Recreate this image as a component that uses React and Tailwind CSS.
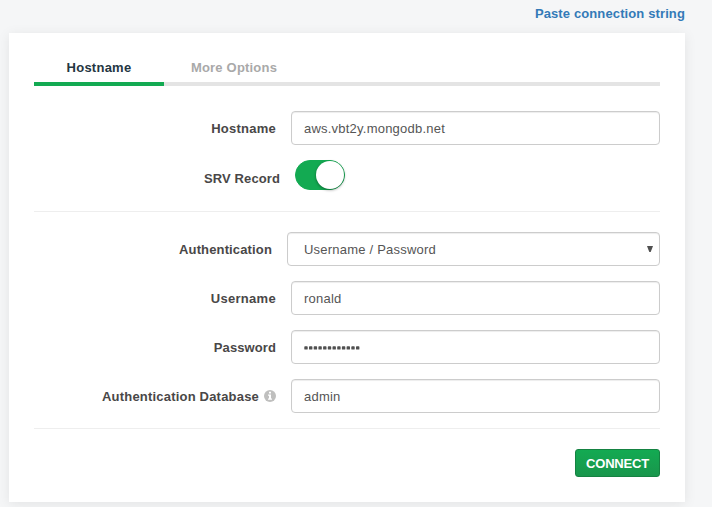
const inputClass =
  'block h-[34px] w-[369px] rounded-[4px] border border-[#ccc] bg-white px-3 text-[13px] tracking-[0.22px] text-[#555] shadow-[inset_0_1px_1px_rgba(0,0,0,0.075)] outline-none';

function Row({ label, labelClass, icon, children, className }) {
  return (
    <div className={'flex items-center justify-end ' + className}>
      <label className={'flex items-center whitespace-nowrap font-bold text-[#494747] ' + labelClass}>
        {label}
        {icon}
      </label>
      {children}
    </div>
  );
}

function InfoIcon() {
  return (
    <svg className="mb-0.5 ml-[5px] size-3" viewBox="0 0 12 12">
      <circle cx="6" cy="6" r="6" fill="#bfbfbe" />
      <path d="M5 1.8h2v1.6H5zM4 4.6h3v4h1v1.2H4V8.6h1V5.8H4z" fill="#fff" />
    </svg>
  );
}

export default function App() {
  return (
    <div className="h-[507px] w-[712px] overflow-hidden bg-[#f5f6f7] font-['Liberation_Sans',Arial,sans-serif] text-[13px] leading-5">
      <div className="flex h-[33px] justify-end pr-[27px] pt-[4px]">
        <a className="font-bold tracking-[0.12px] text-[#337ab7]">Paste connection string</a>
      </div>
      <main className="ml-[9px] h-[469px] w-[676px] bg-white px-[25px] pt-[20px] shadow-[0_2px_12px_rgba(0,0,0,0.08)]">
        <nav className="flex h-[33px] border-b-4 border-[#e4e4e4] font-bold">
          <div className="h-[33px] w-[130px] border-b-4 border-[#13aa52] pt-[5px] text-center tracking-[0.25px] text-[#243642]">
            Hostname
          </div>
          <div className="w-[140px] pt-[5px] text-center tracking-[0.2px] text-[#a9a9a9]">More Options</div>
        </nav>

        <Row className="mt-[25px]" label="Hostname" labelClass="mr-[15px] pt-0.5 tracking-[0.25px]">
          <input className={inputClass} defaultValue="aws.vbt2y.mongodb.net" />
        </Row>
        <Row className="mt-[15px] h-[30px]" label="SRV Record" labelClass="mr-[15px] pt-[8px] tracking-[0.1px]">
          <div className="mr-[315px] flex h-[30px] w-[50px] justify-end rounded-full border border-[#13aa52] bg-[#13aa52]">
            <div className="size-7 rounded-full bg-white shadow-[0_1px_3px_rgba(0,0,0,0.4)]" />
          </div>
        </Row>

        <hr className="mt-[21px] border-[#eee]" />

        <Row className="mt-[20px]" label="Authentication" labelClass="mr-[15px] pt-0.5 tracking-[0.14px]">
          <div className="flex h-[34px] w-[373px] items-center justify-between rounded-[4px] border border-[#ccc] bg-white pl-[16px] pr-[6px] tracking-[0.22px] text-[#555] shadow-[inset_0_1px_1px_rgba(0,0,0,0.075)]">
            <span className="pt-0.5">Username / Password</span>
            <svg className="mb-px h-[6px] w-[6px]" viewBox="0 0 6 6">
              <path d="M0 0h6L3.7 6H2.3z" fill="#505050" />
            </svg>
          </div>
        </Row>
        <Row className="mt-[15px]" label="Username" labelClass="mr-[15px] pt-0.5 tracking-[0.3px]">
          <input className={inputClass} defaultValue="ronald" />
        </Row>
        <Row className="mt-[15px]" label="Password" labelClass="mr-[15px] pt-0.5 tracking-[0.1px]">
          <div className={inputClass + ' !flex items-center'}>
            <svg className="mt-px h-1 w-[57px]" viewBox="0 0 57 4" fill="#505050" aria-label="Password">
              {Array.from({ length: 12 }, (_, i) => (
                <rect key={i} x={0.3 + i * 4.7} y="0.2" width="3.4" height="3.4" rx="0.7" />
              ))}
            </svg>
          </div>
        </Row>
        <Row
          className="mt-[15px]"
          label="Authentication Database"
          labelClass="mr-[15px] pt-0.5 tracking-[0.2px]"
          icon={<InfoIcon />}
        >
          <input className={inputClass} defaultValue="admin" />
        </Row>

        <hr className="mt-[15px] border-[#eee]" />

        <div className="mt-[20px] flex justify-end">
          <button className="h-7 w-[85px] rounded-[3px] border border-[#158242] bg-gradient-to-b from-[#13aa52] to-[#18964c] pt-px text-[13px] font-bold tracking-[-0.2px] text-white">
            CONNECT
          </button>
        </div>
      </main>
    </div>
  );
}
